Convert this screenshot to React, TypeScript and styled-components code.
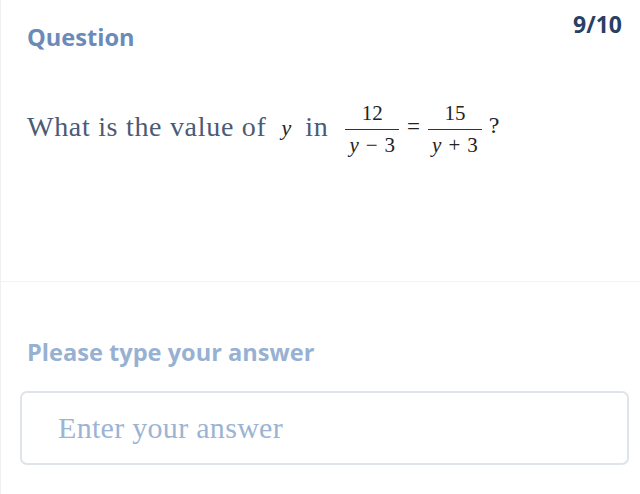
import React from 'react'
import styled, { createGlobalStyle } from 'styled-components'

const GlobalStyle = createGlobalStyle`
  html, body {
    margin: 0;
    padding: 0;
    background: #ffffff;
  }
  * {
    box-sizing: border-box;
  }
`

const Page = styled.div`
  width: 640px;
  height: 494px;
  overflow: hidden;
  border-left: 1px solid #eef0f2;
  display: flex;
  flex-direction: column;
`

const QuestionPanel = styled.section`
  height: 282px;
  padding: 0 18px 0 26px;
  border-bottom: 1px solid #f1f2f4;
`

const Header = styled.div`
  display: flex;
  justify-content: space-between;
  align-items: flex-start;
`

const Label = styled.h2<{ light?: boolean }>`
  margin: 0;
  font-family: 'Open Sans', 'Noto Sans', sans-serif;
  font-weight: 700;
  font-size: 23.6px;
  line-height: 32px;
  color: ${props => (props.light ? '#97b1d3' : '#6a8bb9')};
`

const QuestionLabel = styled(Label)`
  margin-top: 21px;
`

const Counter = styled.span`
  margin-top: 9px;
  font-family: 'Open Sans', 'Noto Sans', sans-serif;
  font-weight: 700;
  font-size: 23px;
  line-height: 30px;
  color: #283f66;
`

const Prompt = styled.p`
  margin: 43px 0 0;
  display: flex;
  align-items: center;
  font-family: 'Liberation Serif', 'DejaVu Serif', serif;
  font-size: 28px;
  letter-spacing: 0.7px;
  color: #4b5b77;
`

const MathVar = styled.span`
  font-family: 'Liberation Serif', serif;
  font-style: italic;
  font-size: 22px;
  letter-spacing: 0;
  color: #222;
  margin: 2px 14px 0 15px;
`

const MathGroup = styled.span`
  display: inline-flex;
  align-items: center;
  margin-left: 17px;
  font-family: 'Liberation Serif', serif;
  letter-spacing: 0;
  color: #222;
`

const Fraction = styled.span`
  display: inline-flex;
  flex-direction: column;
  align-items: center;
  font-size: 21px;
  line-height: 24px;
  margin-top: 5px;
`

const Numerator = styled.span`
  align-self: stretch;
  text-align: center;
  padding: 0 0 4px;
  border-bottom: 1.6px solid #333;
`

const Denominator = styled.span`
  padding: 3px 4px 0;
  & i {
    margin-right: 7px;
  }
  & b {
    font-weight: 400;
    margin-right: 7px;
  }
`

const Equals = styled.span`
  font-size: 23px;
  margin: 0 8px 0 8px;
`

const Mark = styled.span`
  font-size: 24px;
  margin: 0 0 2px 7px;
`

const AnswerPanel = styled.section`
  padding: 54px 11px 0 19px;
`

const AnswerLabel = styled(Label)`
  margin-left: 7px;
`

const AnswerInput = styled.input`
  display: block;
  width: 100%;
  height: 74px;
  margin-top: 23px;
  padding: 0 36px;
  border: 2px solid #dee4e9;
  border-radius: 7px;
  background: #fff;
  font-family: 'Liberation Serif', 'DejaVu Serif', serif;
  font-size: 30px;
  letter-spacing: 0.3px;
  color: #4b5b77;
  outline: none;

  &::placeholder {
    color: #9cb4d4;
  }
`

function Frac({ top, v, op, n }: { top: string; v: string; op: string; n: string }) {
  return (
    <Fraction>
      <Numerator>{top}</Numerator>
      <Denominator>
        <i>{v}</i>
        <b>{op}</b>
        {n}
      </Denominator>
    </Fraction>
  )
}

export default function App() {
  return (
    <>
      <GlobalStyle />
      <Page>
        <QuestionPanel>
          <Header>
            <QuestionLabel>Question</QuestionLabel>
            <Counter>9/10</Counter>
          </Header>
          <Prompt>
            What is the value of
            <MathVar>y</MathVar>
            in
            <MathGroup>
              <Frac top="12" v="y" op="−" n="3" />
              <Equals>=</Equals>
              <Frac top="15" v="y" op="+" n="3" />
              <Mark>?</Mark>
            </MathGroup>
          </Prompt>
        </QuestionPanel>
        <AnswerPanel>
          <AnswerLabel light>Please type your answer</AnswerLabel>
          <AnswerInput placeholder="Enter your answer" />
        </AnswerPanel>
      </Page>
    </>
  )
}
